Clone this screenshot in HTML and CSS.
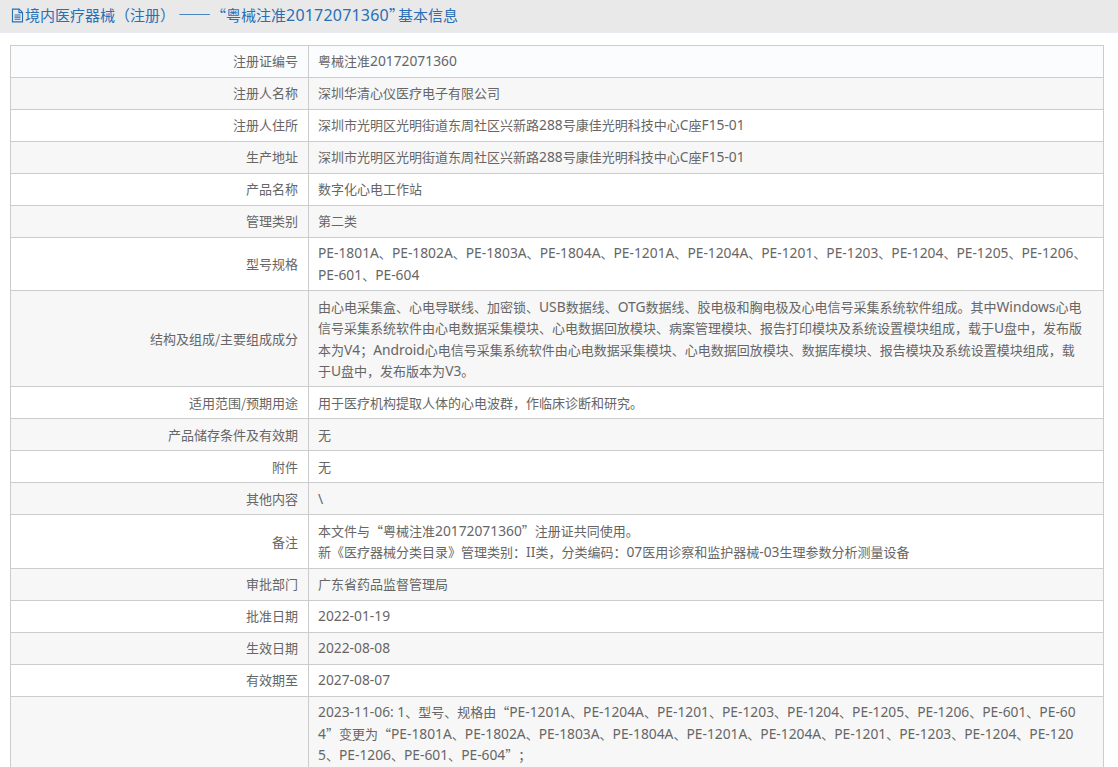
FILE: index.html
```html
<!DOCTYPE html>
<html lang="zh-CN">
<head>
  <meta charset="UTF-8" />
  <title>基本信息</title>
  <link rel="stylesheet" href="styles.css">
</head>
<body>
  <div class="title-bar">
    <svg class="title-icon" xmlns="http://www.w3.org/2000/svg" viewBox="0 0 14 16" fill="none" stroke="currentColor" stroke-width="1.2"><path d="M1.6 1.1h7.2l3.6 3.6v10.2H1.6z"/><path d="M8.6 1.1v3.8h3.8M3.8 7.5h6.4M3.8 9.8h6.4M3.8 12.1h6.4"/></svg>
    <span>境内医疗器械（注册）<span class="dash">——</span>“粤械注准<span class="en">20172071360</span><span class="close-quote">”</span>基本信息</span>
  </div>

  <table class="info-table">
    <tr class="first"><th>注册证编号</th><td>粤械注准<span class="en">20172071360</span></td></tr>
    <tr><th>注册人名称</th><td>深圳华清心仪医疗电子有限公司</td></tr>
    <tr><th>注册人住所</th><td>深圳市光明区光明街道东周社区兴新路<span class="en">288</span>号康佳光明科技中心<span class="en">C</span>座<span class="en">F15-01</span></td></tr>
    <tr><th>生产地址</th><td>深圳市光明区光明街道东周社区兴新路<span class="en">288</span>号康佳光明科技中心<span class="en">C</span>座<span class="en">F15-01</span></td></tr>
    <tr><th>产品名称</th><td>数字化心电工作站</td></tr>
    <tr><th>管理类别</th><td>第二类</td></tr>
    <tr><th>型号规格</th><td><span class="en">PE-1801A</span>、<span class="en">PE-1802A</span>、<span class="en">PE-1803A</span>、<span class="en">PE-1804A</span>、<span class="en">PE-1201A</span>、<span class="en">PE-1204A</span>、<span class="en">PE-1201</span>、<span class="en">PE-1203</span>、<span class="en">PE-1204</span>、<span class="en">PE-1205</span>、<span class="en">PE-1206</span>、<span class="en">PE-601</span>、<span class="en">PE-604</span></td></tr>
    <tr><th>结构及组成/主要组成成分</th><td>由心电采集盒、心电导联线、加密锁、<span class="en">USB</span>数据线、<span class="en">OTG</span>数据线、胶电极和胸电极及心电信号采集系统软件组成。其中<span class="en">Windows</span>心电信号采集系统软件由心电数据采集模块、心电数据回放模块、病案管理模块、报告打印模块及系统设置模块组成，载于<span class="en">U</span>盘中，发布版本为<span class="en">V4</span>；<span class="en">Android</span>心电信号采集系统软件由心电数据采集模块、心电数据回放模块、数据库模块、报告模块及系统设置模块组成，载<br>于<span class="en">U</span>盘中，发布版本为<span class="en">V3</span>。</td></tr>
    <tr><th>适用范围/预期用途</th><td>用于医疗机构提取人体的心电波群，作临床诊断和研究。</td></tr>
    <tr><th>产品储存条件及有效期</th><td>无</td></tr>
    <tr><th>附件</th><td>无</td></tr>
    <tr><th>其他内容</th><td><span class="en">\</span></td></tr>
    <tr><th>备注</th><td>本文件与“粤械注准<span class="en">20172071360</span>”注册证共同使用。<br>新《医疗器械分类目录》管理类别：<span class="en">II</span>类，分类编码：<span class="en">07</span>医用诊察和监护器械<span class="en">-03</span>生理参数分析测量设备</td></tr>
    <tr><th>审批部门</th><td>广东省药品监督管理局</td></tr>
    <tr><th>批准日期</th><td><span class="en">2022-01-19</span></td></tr>
    <tr><th>生效日期</th><td><span class="en">2022-08-08</span></td></tr>
    <tr><th>有效期至</th><td><span class="en">2027-08-07</span></td></tr>
    <tr class="changes"><th></th><td><span class="en">2023-11-06: 1</span>、型号、规格由“<span class="en">PE-1201A</span>、<span class="en">PE-1204A</span>、<span class="en">PE-1201</span>、<span class="en">PE-1203</span>、<span class="en">PE-1204</span>、<span class="en">PE-1205</span>、<span class="en">PE-1206</span>、<span class="en">PE-601</span>、<span class="en">PE-604</span>”变更为“<span class="en">PE-1801A</span>、<span class="en">PE-1802A</span>、<span class="en">PE-1803A</span>、<span class="en">PE-1804A</span>、<span class="en">PE-1201A</span>、<span class="en">PE-1204A</span>、<span class="en">PE-1201</span>、<span class="en">PE-1203</span>、<span class="en">PE-1204</span>、<span class="en">PE-1205</span>、<span class="en">PE-1206</span>、<span class="en">PE-601</span>、<span class="en">PE-604</span>”；</td></tr>
  </table>
</body>
</html>
```

FILE: styles.css
```css
* {
  box-sizing: border-box;
  margin: 0;
  padding: 0;
}

html, body {
  height: 767px;
  overflow: hidden;
}

body {
  background-color: #fff;
  color: #666;
  font-family: "Noto Sans CJK SC", "Noto Sans", sans-serif;
  font-size: 13px;
  line-height: 21.4px;
  text-spacing-trim: space-all;
}

.en {
  font-family: "Noto Sans", sans-serif;
  font-size: 13.8px;
  line-height: 1;
  white-space: nowrap;
}

.title-bar {
  display: flex;
  align-items: center;
  gap: 1px;
  height: 33px;
  padding: 0 0 2px 11px;
  background-color: #e9e9e9;
  border-bottom: 1px solid #e8ebf5;
  color: #2a6fb5;
  font-size: 15px;
}

.title-bar .en {
  font-size: 16px;
  letter-spacing: 0.2px;
}

.title-bar .dash {
  margin-left: 3px;
  font-size: 16.5px;
  line-height: 1;
}

.title-bar .close-quote {
  letter-spacing: -6px;
}

.title-icon {
  width: 13px;
  height: 15px;
}

.info-table {
  width: 1094px;
  margin: 11.5px 0 0 10px;
  border-collapse: collapse;
  table-layout: fixed;
}

.info-table th,
.info-table td {
  border: 1px solid #ccc;
  padding: 4.8px 9px;
  font-weight: normal;
}

.info-table th {
  width: 298px;
  padding-right: 10px;
  text-align: right;
}

.info-table tr:nth-child(even) {
  background-color: #f7f7f7;
}

.info-table tr.first {
  background-color: #fbfcfe;
}

.changes td {
  word-break: break-all;
  padding-bottom: 40px;
}

.changes .en {
  white-space: normal;
}
```
